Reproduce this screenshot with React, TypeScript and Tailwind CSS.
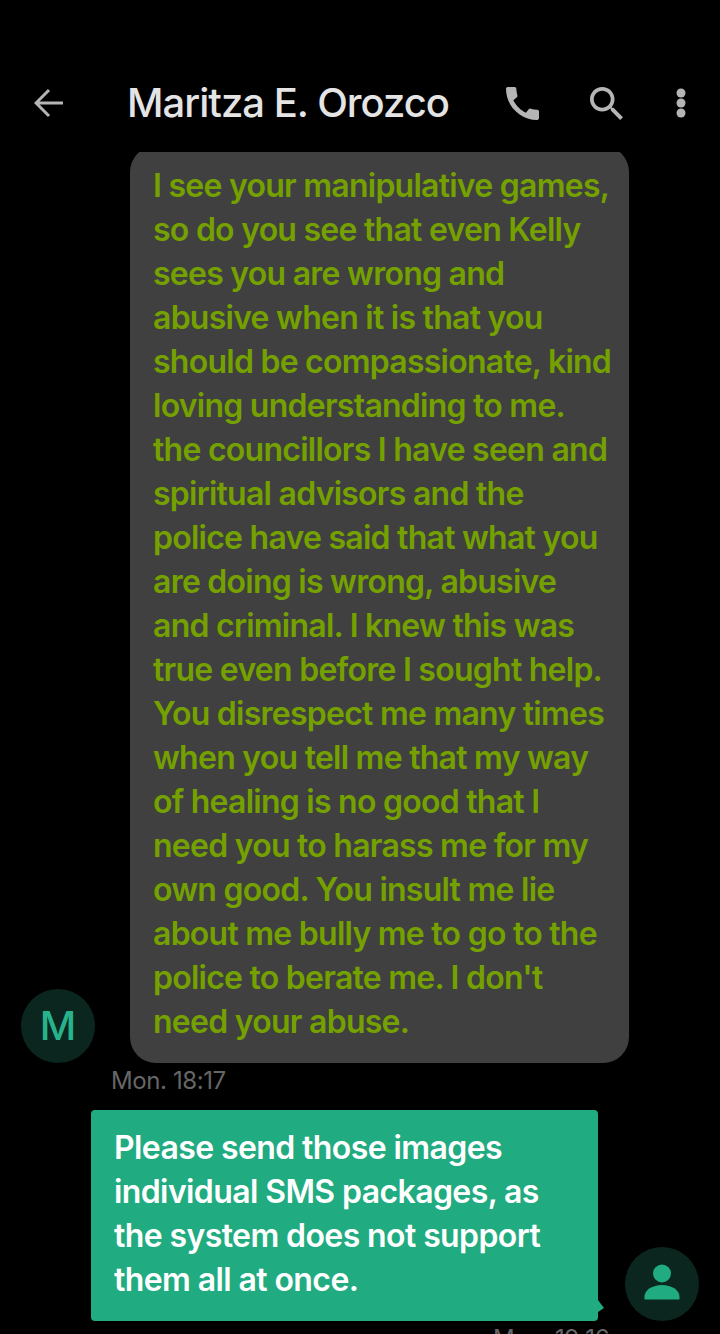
const incoming = [
  'I see your manipulative games,',
  'so do you see that even Kelly',
  'sees you are wrong and',
  'abusive when it is that you',
  'should be compassionate, kind',
  'loving understanding to me.',
  'the councillors I have seen and',
  'spiritual advisors and the',
  'police have said that what you',
  'are doing is wrong, abusive',
  'and criminal. I knew this was',
  'true even before I sought help.',
  'You disrespect me many times',
  'when you tell me that my way',
  'of healing is no good that I',
  'need you to harass me for my',
  'own good. You insult me lie',
  'about me bully me to go to the',
  'police to berate me. I don\'t',
  'need your abuse.',
];

const outgoing = [
  'Please send those images',
  'individual SMS packages, as',
  'the system does not support',
  'them all at once.',
];

export default function App() {
  return (
    <div className="h-[1334px] w-[720px] overflow-hidden bg-black font-['Inter','Liberation_Sans',sans-serif]">
      <header className="flex h-[152px] items-start pt-[76px]">
        <div className="flex h-[54px] w-full items-center">
          <svg viewBox="0 0 30 30" className="ml-[34px] h-[30px] w-[30px] fill-none stroke-[#b5b5b5] stroke-[3]">
            <path d="M29 15H3M15 2L2 15l13 13" />
          </svg>
          <h1 className="ml-[63px] w-[379px] whitespace-nowrap text-[40px] font-medium tracking-[-1px] text-[#e4e4e4]">
            Maritza E. Orozco
          </h1>
          <svg viewBox="3 3 18 18" className="h-[33px] w-[33px] fill-[#b5b5b5]">
            <path d="M20.01 15.38c-1.23 0-2.42-.2-3.53-.56-.35-.12-.74-.03-1.01.24l-1.57 1.97c-2.83-1.35-5.48-3.9-6.89-6.83l1.95-1.66c.27-.28.35-.67.24-1.02-.37-1.11-.56-2.3-.56-3.53 0-.54-.45-.99-.99-.99H4.19C3.65 3 3 3.24 3 3.99 3 13.28 10.73 21 20.01 21c.71 0 .99-.63.99-1.18v-3.45c0-.54-.45-.99-.99-.99z" />
          </svg>
          <svg viewBox="3 3 17.5 17.5" className="ml-[51px] h-[33px] w-[33px] fill-[#b5b5b5]">
            <path d="M15.5 14h-.79l-.28-.27C15.41 12.59 16 11.11 16 9.5 16 5.910 13.09 3 9.5 3S3 5.910 3 9.5 5.910 16 9.5 16c1.610 0 3.090-.59 4.230-1.570l.27.28v.79l5 4.990L20.490 19l-4.990-5zm-6 0C7.010 14 5 11.990 5 9.5S7.010 5 9.500 5 14 7.010 14 9.500 11.990 14 9.500 14z" />
          </svg>
          <svg viewBox="0 0 10 30" className="ml-[53px] h-[30px] w-[10px] fill-[#b5b5b5]">
            <circle cx="5" cy="5" r="4.500" />
            <circle cx="5" cy="15" r="4.500" />
            <circle cx="5" cy="25" r="4.500" />
          </svg>
        </div>
      </header>

      <div className="flex items-end pl-[21px]">
        <div className="flex h-[74px] w-[74px] items-center justify-center rounded-full bg-[#0a261e] text-[40px] font-medium text-[#27b28c]">
          M
        </div>
        <div className="ml-[35px] w-[499px] overflow-hidden">
          <div className="-mt-[6px] rounded-[26px] bg-[#404040] pb-[19px] pl-[23px] pt-[18px] text-[32px] font-semibold leading-[44px] tracking-[-0.75px] text-[#75a100]">
            {incoming.map((line) => (
              <div key={line} className="whitespace-nowrap">{line}</div>
            ))}
          </div>
        </div>
      </div>

      <div className="mt-[4px] pl-[111px] text-[24px] leading-[28px] tracking-[-0.4px] text-[#666666]">Mon. 18:17</div>

      <div className="mt-[15px] flex items-end pl-[91px]">
        <div className="relative h-[211px] w-[507px] rounded-[4px] bg-[#20ab80] pl-[23px] pt-[16px] text-[32px] font-semibold leading-[44px] tracking-[-0.6px] text-white">
          {outgoing.map((line) => (
            <div key={line} className="whitespace-nowrap">{line}</div>
          ))}
          <div className="absolute bottom-[9px] right-[-6px] h-0 w-0 border-b-[4px] border-l-[6px] border-t-[8px] border-y-transparent border-l-[#20ab80]" />
        </div>
        <div className="ml-[27px] flex h-[74px] w-[74px] items-center justify-center rounded-full bg-[#0a261e]">
          <svg viewBox="0 0 36 36" className="-mt-[4px] h-[36px] w-[36px] fill-[#20ab80]">
            <circle cx="18" cy="9.500" r="9" />
            <path d="M0.500 35.500v-3c0-6.500 8-11.500 17.500-11.500s17.500 5 17.500 11.500v3z" />
          </svg>
        </div>
      </div>

      <div className="mt-[4px] pl-[493px] text-[24px] leading-[28px] tracking-[-0.4px] text-[#666666]">Mon. 19:16</div>
    </div>
  );
}
